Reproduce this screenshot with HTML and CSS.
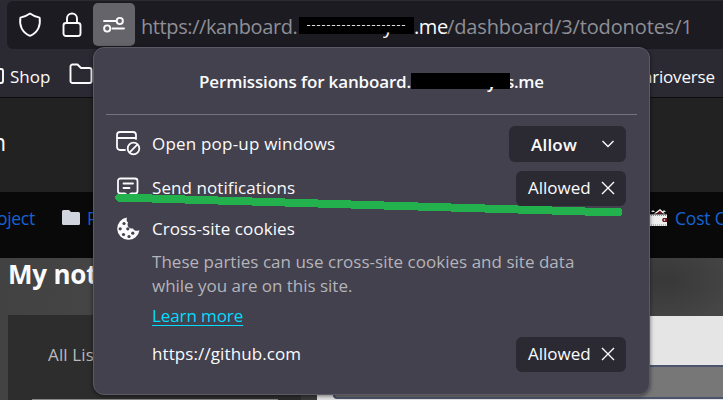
FILE: index.html
```html
<!DOCTYPE html>
<html lang="en">
<head>
<meta charset="utf-8">
<title>Site permissions</title>
<link rel="stylesheet" href="styles.css">
</head>
<body>
<div class="window">
  <header class="toolbar">
    <div class="urlbar">
      <span class="url-icon"><svg width="24" height="26" viewBox="0 0 24 26"><path d="M12 1.6 Q16 4.6 21.6 5.6 C22.8 12.5 20.5 20.5 12 23.8 C3.500 20.500 1.200 12.500 2.400 5.600 Q8 4.600 12 1.600Z"/></svg></span>
      <span class="url-icon lock"><svg width="20" height="26" viewBox="0 0 20 26"><rect x="1.500" y="11" width="17" height="13" rx="2.500"/><path d="M5 11V6.500a5 5 0 0 1 10 0V11"/></svg></span>
      <span class="perm-button"><svg width="24" height="18" viewBox="0 0 24 18"><path d="M2 5H14M10.500 12.500H22"/><circle cx="17.800" cy="5" r="3.100"/><circle cx="5.200" cy="12.500" r="3.100"/></svg></span>
      <span class="url"><span class="host">https://kanboard.</span><span class="redact url-redact"><i class="dashes"></i><i class="tail">y</i></span><b>.me</b><span class="path">/dashboard/3/todonotes/1</span></span>
    </div>
    <div class="bookmarks">
      <svg width="8" height="20" viewBox="0 0 8 20"><path d="M0 3h1a2 2 0 0 1 2 2v10a2 2 0 0 1-2 2H0"/></svg>
      <span class="shop">Shop</span>
      <svg class="folder" width="24" height="22" viewBox="0 0 24 22"><path d="M3.500 1.500h5l3.500 3.500h8.500a2 2 0 0 1 2 2v11a2 2 0 0 1-2 2h-17a2 2 0 0 1-2-2v-14.500a2 2 0 0 1 2-2Z"/></svg>
      <span class="verse">arioverse</span>
    </div>
  </header>
  <div class="band"><span>n</span></div>
  <nav class="links">
    <span class="project">oject</span>
    <svg class="solid-folder" width="18" height="16" viewBox="0 0 18 16"><path d="M0 1.500Q0 0 1.500 0H7L9 2H16.500Q18 2 18 3.500V13.500Q18 15 16.500 15H1.500Q0 15 0 13.500Z"/></svg>
    <span class="letter">P</span>
    <svg class="wallet" width="19" height="18" viewBox="0 0 19 18"><path fill="#ddd" d="M2 3l2-2 2 2zM13 3l2-2 2 2z"/><path fill="#701820" stroke="#fff" stroke-width="1.200" d="M5.500 5L11 .800L15.500 5"/><path fill="#111" d="M1 4.500h17v1H1z"/><path fill="#eee" d="M1 5.500h17V17H1z"/><path fill="none" stroke="#888" stroke-dasharray="1 1" d="M2 6.500h15M2 16h15"/><path fill="#641820" d="M14 9h4v4h-4l-1-2z"/><circle cx="15.500" cy="11" r=".8" fill="#fff"/></svg>
    <span class="cost">Cost O</span>
  </nav>
  <main class="content">
    <section class="notes"><h1>My notes</h1><div class="list"><span>All Lists</span><div class="list-line"></div></div></section>
    <section class="table-panel"><div class="table"></div></section>
  </main>
</div>

<aside class="popup">
  <h2><span class="title-host">Permissions for kanboard.</span><span class="redact title-redact"><i class="tail">y</i></span><span class="title-end">s.me</span></h2>
  <div class="row first">
    <svg width="26" height="26" viewBox="0 0 26 26"><path d="M10 19H5a3 3 0 0 1-3-3V4a3 3 0 0 1 3-3H18a3 3 0 0 1 3 3V8M2 7H21"/><circle cx="18.500" cy="17.500" r="5.800"/><path d="M14.700 21.300l7.600-7.600"/></svg>
    <span class="label popups">Open pop-up windows</span>
    <span class="button select"><b>Allow</b><svg width="14" height="10" viewBox="0 0 14 10"><path d="M1.500 2L7 7.500L12.500 2"/></svg></span>
  </div>
  <div class="row second">
    <svg width="26" height="26" viewBox="0 0 26 26"><path d="M5.500 3.500H20a2.500 2.500 0 0 1 2.500 2.500V16a2.500 2.500 0 0 1-2.500 2.500H16l-3 2.500-3-2.500H5.500a2.500 2.500 0 0 1-2.500-2.500V6a2.500 2.500 0 0 1 2.500-2.500ZM8.500 8.500H18M8.500 13H14.500"/></svg>
    <span class="label send">Send notifications</span>
    <span class="button"><span>Allowed</span><svg width="14" height="14" viewBox="0 0 14 14"><path d="M1 1L13 13M13 1L1 13"/></svg></span>
  </div>
  <div class="row third">
    <svg class="cookie" width="26" height="26" viewBox="0 0 26 26"><path fill="#fbfbfe" stroke="none" d="M12 1.500A11.200 11.200 0 1 0 24.500 14C22 15.500 19 15 18 12.500C14 13 11.500 10 13 6.500C11.500 5.500 11.300 3.500 12 1.500Z"/><g class="chips"><circle cx="9" cy="7.500" r="1.600"/><circle cx="5.200" cy="12.800" r="1.600"/><circle cx="12.800" cy="12.800" r="1.600"/><circle cx="8.500" cy="18.500" r="1.600"/><circle cx="14" cy="20.500" r="1.600"/><circle cx="17.800" cy="17.200" r="1.600"/></g></svg>
    <span class="label cookies">Cross-site cookies</span>
  </div>
  <div class="description"><span class="line1">These parties can use cross-site cookies and site data</span><br><span class="line2">while you are on this site.</span></div>
  <a class="learn">Learn more</a>
  <div class="row site">
    <span class="label github">https://github.com</span>
    <span class="button"><span>Allowed</span><svg width="14" height="14" viewBox="0 0 14 14"><path d="M1 1L13 13M13 1L1 13"/></svg></span>
  </div>
</aside>
<svg class="marker" width="510" height="24" viewBox="0 0 510 24" shape-rendering="crispEdges"><path d="M2 1H37V2H70V3H103V4H137V5H170V6H203V7H236V8H269V9H303V10H336V11H370V12H403V13H437V14H470V15H505L507 17V21L505 23H470V22H437V21H403V20H370V19H336V18H303V17H269V16H236V15H203V14H170V13H137V12H103V11H70V10H37V9H3L0 6V3Z"/></svg>
</body>
</html>
```
FILE: styles.css
```css
* { box-sizing: border-box; }
body { margin: 0; width: 723px; height: 400px; overflow: hidden; font-family: "Open Sans", "Noto Sans", sans-serif; color: #fbfbfe; font-size: 17px; white-space: nowrap; }
svg { display: block; flex: none; }
h1, h2 { margin: 0; }
.window { height: 400px; display: flex; flex-direction: column; overflow: hidden; }
.toolbar { height: 98px; flex: none; padding-top: 1px; background: #2b2a33; border-bottom: 1px solid #0c0c0d; }
.urlbar { height: 48px; margin-left: 7px; padding-left: 11px; background: #1c1b22; border-radius: 6px 0 0 6px; display: flex; align-items: center; }
.url-icon svg, .perm-button svg, .bookmarks svg { fill: none; stroke: #fbfbfe; stroke-width: 1.9; stroke-linejoin: round; stroke-linecap: round; }
.lock { margin-left: 20px; }
.perm-button { width: 42px; height: 43px; margin: -1px 0 0 11px; border-radius: 5px; background: #65646a; display: flex; justify-content: center; align-items: center; }
.url { margin: 3px 0 0 6px; display: flex; font-size: 20px; line-height: 30px; color: #8f8f96; }
.url b { font-weight: 400; color: #fbfbfe; width: 33px; letter-spacing: -.4px; }
.host { width: 158px; letter-spacing: -.4px; }
.path { letter-spacing: -.13px; }
.redact { background: #000; position: relative; }
.url-redact { width: 115px; height: 17px; margin-top: 5px; }
.dashes { display: block; width: 99px; height: 1px; margin: 8px 0 0 8px; background: repeating-linear-gradient(90deg, #ddd 0 3px, #222 3px 5px); }
.tail { position: absolute; color: #fbfbfe; font-style: normal; overflow: hidden; }
.tail { clip-path: inset(22px 0 0 0); }
.url-redact .tail { left: 84px; top: -6px; }
.bookmarks { height: 48px; display: flex; align-items: center; padding-top: 6px; }
.shop { width: 42px; margin: 0 17px 0 2px; }
.folder { margin-top: -4px; }
.verse { margin-left: 550px; letter-spacing: -.2px; }
.band { height: 94px; flex: none; background: #222; font-size: 23px; line-height: 89px; overflow: hidden; }
.band span { margin-left: -8px; }
.links { height: 66px; flex: none; background: #090909; color: #1762d2; display: flex; align-items: center; padding-bottom: 14px; font-size: 17.5px; }
.links span { flex: none; }
.project { width: 38px; margin-left: -3px; letter-spacing: -.3px; }
.solid-folder { margin-left: 27px; fill: #d0d4dc; }
.letter { width: 20px; margin-left: 7px; }
.wallet { margin-left: 542px; }
.cost { margin-left: 7px; letter-spacing: -.2px; }
.content { flex: 1; display: flex; background: radial-gradient(ellipse 70px 40px at 665px 22px, #383838, transparent), linear-gradient(100deg, #424242, #454545 14%, #393939 50%, #464646); }
.notes { width: 317px; padding-left: 8px; }
h1 { height: 57px; line-height: 32px; font-size: 26px; letter-spacing: -.2px; }
.list { height: 85px; width: 293px; background: #2d2d2d; color: #bbb; padding: 28px 0 0 40px; display: flex; flex-direction: column; justify-content: space-between; font-size: 17px; letter-spacing: .15px; }
.list-line { width: 246px; height: 1px; margin-left: -16px; background: #888; }
.table-panel { width: 406px; height: 84px; margin-top: 58px; background: #e5e5e5; padding: 49px 0 0 16px; }
.table { height: 34px; background: #777; border: 2px solid #4a556d; border-right: 0; border-radius: 4px 0 0 4px; }
.popup { position: absolute; left: 93px; top: 47px; width: 557px; height: 348px; padding: 0 12px; border: 1px solid #5b5a66; border-radius: 11px; background: #42414d; box-shadow: 0 1px 4px #0008; }
h2 { display: flex; height: 67px; padding-left: 93px; border-bottom: 1px solid #74737c; font-size: 17px; font-weight: 600; line-height: 67px; }
.title-host { width: 212px; letter-spacing: -.15px; }
.title-redact { width: 99px; height: 16px; margin-top: 25px; }
.title-redact .tail { left: 76px; top: -8px; line-height: 34px; }
.title-end { margin-left: -4px; letter-spacing: -.3px; clip-path: inset(0 0 0 4px); }
.row { display: flex; align-items: center; padding: 0 11px 0 9px; }
.row > svg { fill: none; stroke: #fbfbfe; stroke-width: 1.8; stroke-linejoin: round; stroke-linecap: round; }
.label { margin: -1px 0 0 11px; letter-spacing: .08px; }
.first { height: 58px; }
.second { height: 30px; }
.third { height: 52px; }
.popups { letter-spacing: .2px; }
.button { width: 110px; height: 35px; margin-left: auto; padding: 0 11px 0 12px; border-radius: 6px; background: #2b2a33; display: flex; align-items: center; justify-content: space-between; font-size: 17px; letter-spacing: 0; }
.button > span { margin-top: -1px; }
.button svg { fill: none; stroke: #fbfbfe; stroke-width: 1.4; }
.select { width: 117px; height: 36px; padding-left: 22px; }
.select b { font-weight: 600; letter-spacing: .2px; }
.chips { fill: #42414d; stroke: none; }
.description { height: 48px; margin-top: -5px; padding-left: 46px; color: #b5b4bb; font-size: 17px; line-height: 24px; letter-spacing: .02px; }
.line2 { letter-spacing: -.02px; }
.learn { display: block; width: max-content; margin: 6px 0 0 46px; color: #00ddff; text-decoration: underline; text-underline-offset: 3px; line-height: 24px; letter-spacing: -.1px; }
.site { height: 36px; margin-top: 8px; }
.github { margin: -1px 0 0 37px; letter-spacing: .1px; }
.marker { position: absolute; left: 115px; top: 193px; fill: #22b14c; }
```
